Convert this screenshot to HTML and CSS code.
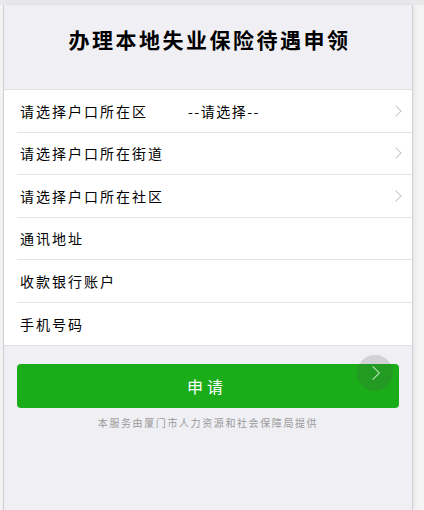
FILE: index.html
```html
<!DOCTYPE html>
<html>
<head>
	<meta charset="utf-8">
	<title>办理本地失业保险待遇申领</title>
	<link rel="stylesheet" href="styles.css">
</head>
<body>
	<div class="topbar"></div>
	<div class="page">
		<h1 class="title">办理本地失业保险待遇申领</h1>
		<div class="list">
			<div class="row">
				<span class="label">请选择户口所在区</span>
				<span class="value">--请选择--</span>
				<span class="arrow"></span>
			</div>
			<div class="row">
				<span class="label">请选择户口所在街道</span>
				<span class="arrow"></span>
			</div>
			<div class="row">
				<span class="label">请选择户口所在社区</span>
				<span class="arrow"></span>
			</div>
			<div class="row">
				<span class="label">通讯地址</span>
			</div>
			<div class="row">
				<span class="label">收款银行账户</span>
			</div>
			<div class="row">
				<span class="label">手机号码</span>
			</div>
		</div>
		<div class="actions">
			<button class="btn">申请</button>
			<div class="float-btn"><span class="float-arrow"></span></div>
		</div>
		<p class="footer">本服务由厦门市人力资源和社会保障局提供</p>
	</div>
</body>
</html>
```

FILE: styles.css
```css
body {
  margin: 0;
  background-color: #f4f4f5;
  font-family: "Noto Sans CJK SC", "Noto Sans", sans-serif;
  color: #000;
}

.topbar {
  height: 5px;
  background-color: #e9e9eb;
}

.page {
  margin-left: 3px;
  width: 408px;
  min-height: 505px;
  border-left: 1px solid #cfcfd2;
  border-right: 1px solid #cfcfd2;
  background-color: #efeff4;
  box-shadow: 2px 0 6px rgba(0,0,0,0.06);
}

.title {
  margin: 0;
  height: 85px;
  box-sizing: border-box;
  padding-top: 19px;
  text-align: center;
  font-size: 21px;
  line-height: 30px;
  font-weight: bold;
  letter-spacing: 2.5px;
  padding-left: 3px;
  border-bottom: 1px solid #e0e0e3;
}

.list {
  background-color: #fff;
  border-bottom: 1px solid #e0e0e3;
}

.row {
  display: flex;
  align-items: center;
  height: 42.5px;
  box-sizing: border-box;
  margin-left: 13px;
  padding-right: 12px;
  border-bottom: 1px solid #e5e5e5;
  font-size: 14px;
  letter-spacing: 2px;
}

.row:last-child {
  border-bottom: none;
}

.label {
  width: 168px;
  padding-left: 3px;
}

.value {
  flex-grow: 1;
  letter-spacing: 1.5px;
}

.arrow {
  margin-left: auto;
  width: 7px;
  height: 7px;
  border-top: 1.5px solid #c7c7cc;
  border-right: 1.5px solid #c7c7cc;
  transform: rotate(45deg);
}

.actions {
  position: relative;
  padding: 18px 13px 0 13px;
}

.btn {
  display: block;
  width: 100%;
  height: 44px;
  background-color: #1aad19;
  color: #fff;
  border: none;
  border-radius: 4px;
  font-family: inherit;
  font-size: 16px;
  letter-spacing: 4px;
  padding-left: 4px;
  cursor: pointer;
}

.float-btn {
  position: absolute;
  left: 353px;
  top: 9px;
  width: 36px;
  height: 36px;
  border-radius: 50%;
  background-color: rgba(80,80,80,0.18);
  display: flex;
  align-items: center;
  justify-content: center;
}

.float-arrow {
  width: 9px;
  height: 9px;
  margin-right: 5px;
  border-top: 1px solid rgba(255,255,255,0.7);
  border-right: 1px solid rgba(255,255,255,0.7);
  transform: rotate(45deg);
}

.footer {
  margin: 7px 0 0 0;
  text-align: center;
  font-size: 10px;
  color: #9a9a9a;
  letter-spacing: 1.6px;
}
```
